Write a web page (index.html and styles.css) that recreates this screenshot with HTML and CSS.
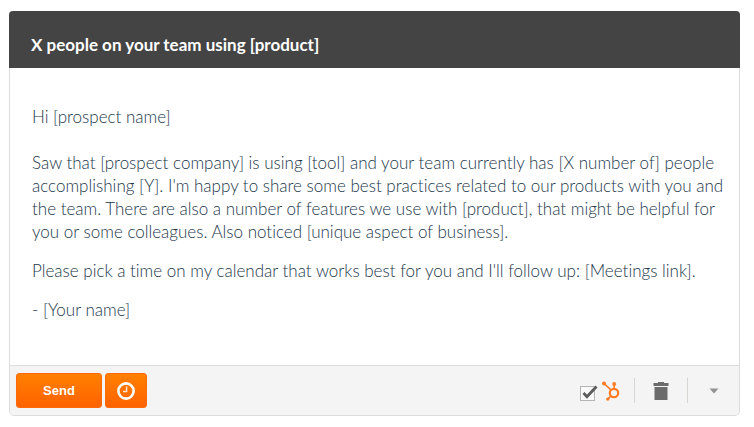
FILE: index.html
```html
<!DOCTYPE html>
<html lang="en">
<head>
<meta charset="utf-8">
<title>Email template</title>
<link rel="stylesheet" href="styles.css">
</head>
<body>
<article class="email">
  <header class="email-header">
    <h1 class="subject">X people on your team using [product]</h1>
  </header>
  <div class="email-body">
    <p>Hi [prospect name]<br><br>Saw that [prospect company] is using [tool] and your team currently has [X number of] people accomplishing [Y]. I'm happy to share some best practices related to our products with you and the team. There are also a number of features we use with [product], that might be helpful for you or some colleagues. Also noticed [unique aspect of business].</p>
    <p>Please pick a time on my calendar that works best for you and I'll follow up: [Meetings link].</p>
    <p>- [Your name]</p>
  </div>
  <footer class="toolbar">
    <div class="actions">
      <button class="button send" type="button">Send</button>
      <button class="button schedule" type="button" aria-label="Schedule">
        <svg width="18" height="18" viewBox="0 0 18 18" fill="none" stroke="#fff">
          <circle cx="9" cy="9" r="7.6" stroke-width="2.6"/>
          <path d="M9.6 4.5V9.6H6" stroke-width="1.5" stroke="#ffe6d2"/>
        </svg>
      </button>
    </div>
    <div class="tools">
      <label class="track">
        <span class="tick">
          <input type="checkbox" checked aria-label="Track in HubSpot">
          <svg class="tick-mark" width="18" height="16" viewBox="0 0 18 16" fill="none" stroke="#5c5c5c">
            <path d="M3.5 8L7 11.8L16.5 1.5" stroke-width="2.8"/>
          </svg>
        </span>
        <svg width="18" height="20" viewBox="0 0 18 20" fill="none" stroke="#ff7a22">
          <circle cx="12" cy="12" r="4.2" stroke-width="2.2"/>
          <path d="M2 2.5L9 8.8M12.2 2.5V8M8.8 15.2L5.5 18.3" stroke-width="1.6"/>
          <g fill="#ff7a22" stroke="none">
            <circle cx="2" cy="2.4" r="2"/>
            <circle cx="12.2" cy="3" r="1.9"/>
            <circle cx="5.8" cy="18.1" r="1.7"/>
          </g>
        </svg>
      </label>
      <button class="tool trash" type="button" aria-label="Delete">
        <svg width="16" height="20" viewBox="0 0 16 20" fill="#6b6b6b">
          <path d="M5 2V1H11V2H15.5V5H.5V2ZM1.5 6H14.5V19H1.5Z"/>
        </svg>
      </button>
      <button class="tool more" type="button" aria-label="More options">
        <svg width="10" height="6" viewBox="0 0 10 6" fill="#929292">
          <path d="M.5 .5H9.5L5 5.5Z"/>
        </svg>
      </button>
    </div>
  </footer>
</article>
</body>
</html>
```
FILE: styles.css
```css
* {
  box-sizing: border-box;
}

body {
  margin: 0;
  padding: 11px 14px 11px 9px;
  background: #fff;
  font-family: Lato, "Liberation Sans", sans-serif;
  font-variant-ligatures: none;
}

.email {
  border: 1px solid #dcdcdc;
  border-top: 0;
  border-radius: 5px;
}

.email-header {
  margin: 0 -1px;
  padding: 22px 22px 12px;
  border-radius: 4px 4px 0 0;
  background: #444;
}

.subject {
  margin: 0;
  color: #fff;
  font-size: 17px;
  font-weight: 700;
  line-height: 23px;
}

.email-body {
  padding: 37px 12px 44px 22px;
  color: #22364a;
  font-size: 17px;
  font-weight: 300;
  line-height: 23px;
}

.email-body p {
  margin: 0 0 16px;
}

.email-body p:last-child {
  margin-bottom: 0;
}

.toolbar {
  display: flex;
  align-items: center;
  justify-content: space-between;
  padding: 7px 0 7px 6px;
  border-top: 1px solid #dcdcdc;
  border-radius: 0 0 4px 4px;
  background: #f4f4f4;
}

.actions {
  display: flex;
  gap: 3px;
}

.button {
  display: flex;
  align-items: center;
  justify-content: center;
  height: 35px;
  padding: 0;
  border: 1px solid #ff6a0a;
  border-radius: 3px;
  background: linear-gradient(#ff8000, #ff6200);
  color: #fff;
  font: bold 13px "Liberation Sans", Arial, sans-serif;
}

.send {
  width: 86px;
}

.schedule {
  width: 42px;
}

.tools {
  display: flex;
  align-items: center;
}

.track {
  display: flex;
  align-items: center;
  gap: 4px;
  padding-right: 14px;
}

.track > svg {
  display: block;
}

.tick {
  display: flex;
  align-items: flex-end;
  position: relative;
  width: 18px;
  height: 20px;
}

.tick input {
  appearance: none;
  width: 15px;
  height: 15px;
  margin: 0;
  border: 1px solid #b5b5b5;
  background: #fafafa;
}

.tick-mark {
  position: absolute;
  top: 4px;
  left: 0;
}

.tool {
  display: flex;
  align-items: center;
  justify-content: center;
  height: 25px;
  padding: 0;
  border: 0;
  border-left: 1px solid #d6d6d2;
  background: none;
}

.trash {
  width: 53px;
}

.more {
  width: 52px;
}
```
